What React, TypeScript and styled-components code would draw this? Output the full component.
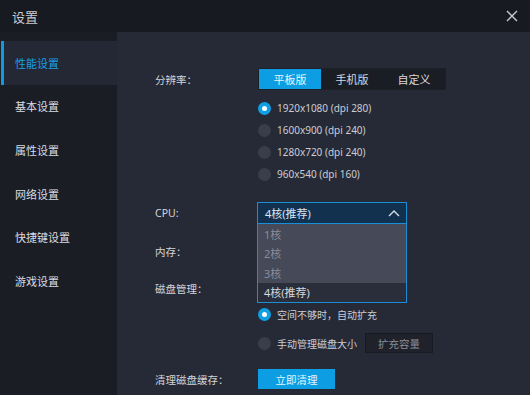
import React from 'react';
import styled, {createGlobalStyle} from 'styled-components';

const GlobalStyle = createGlobalStyle`
  html, body {
    margin: 0;
    padding: 0;
    background: #262a37;
    overflow: hidden;
  }
  * {
    box-sizing: border-box;
  }
`;

const Window = styled.div`
  width: 530px;
  height: 395px;
  display: flex;
  flex-direction: column;
  font-family: "Noto Sans", "Noto Sans CJK SC", sans-serif;
  color: #d2d4da;
`;

const TitleBar = styled.div`
  height: 32px;
  flex-shrink: 0;
  display: flex;
  align-items: center;
  justify-content: space-between;
  padding: 0 12px;
  background: #181a21;
`;

const Title = styled.span`
  font-size: 13px;
  color: #c9cbd1;
`;

const CloseButton = styled.div`
  width: 14px;
  height: 14px;
  display: flex;
  align-items: center;
  justify-content: center;
  margin-right: -1px;
`;

const Body = styled.div`
  flex: 1;
  display: flex;
`;

const Sidebar = styled.ul`
  width: 117px;
  flex-shrink: 0;
  margin: 0;
  padding: 9px 0 0 1px;
  list-style: none;
  background: #1b1d25;
`;

const NavItem = styled.li<{active?: boolean}>`
  height: 43.6px;
  display: flex;
  align-items: center;
  padding-left: ${p => (p.active ? '11px' : '14px')};
  font-size: 11px;
  color: ${p => (p.active ? '#1a9fe3' : '#dadce1')};
  background: ${p => (p.active ? '#242734' : 'transparent')};
  border-left: ${p => (p.active ? '3px solid #0e9be0' : 'none')};
`;

const Content = styled.div`
  flex: 1;
  padding: 36px 0 0 38px;
  background: #262a37;
`;

const Row = styled.div<{gap?: number}>`
  display: flex;
  align-items: flex-start;
  margin-top: ${p => p.gap ?? 0}px;
`;

const Label = styled.div`
  width: 103px;
  height: 22px;
  flex-shrink: 0;
  display: flex;
  align-items: center;
  font-size: 10.5px;
  color: #d2d4da;
`;

const Column = styled.div`
  display: flex;
  flex-direction: column;
`;

const Segmented = styled.div`
  display: flex;
  height: 22px;
  background: #1b1d25;
  border: 1px solid #1d2029;
  margin-bottom: 7px;
`;

const Segment = styled.div<{active?: boolean}>`
  width: 62px;
  display: flex;
  align-items: center;
  justify-content: center;
  font-size: 11px;
  color: ${p => (p.active ? '#e8f5fd' : '#d6d8dd')};
  background: ${p => (p.active ? '#0c9de3' : 'transparent')};
`;

const RadioRow = styled.div<{gap?: number}>`
  height: 22px;
  display: flex;
  align-items: center;
  gap: 6px;
  margin-top: ${p => p.gap ?? 0}px;
  font-size: 10px;
  color: #cbcdd3;
`;

const RadioDot = styled.span<{checked?: boolean}>`
  width: 13px;
  height: 13px;
  border-radius: 50%;
  flex-shrink: 0;
  display: flex;
  align-items: center;
  justify-content: center;
  background: ${p => (p.checked ? '#119fe4' : '#3a3d4a')};

  &::after {
    content: '';
    display: ${p => (p.checked ? 'block' : 'none')};
    width: 5px;
    height: 5px;
    border-radius: 50%;
    background: #ffffff;
  }
`;

const SelectWrap = styled.div`
  position: relative;
  width: 150px;
  margin-left: -1px;
`;

const SelectBox = styled.div<{open?: boolean}>`
  height: 22px;
  display: flex;
  align-items: center;
  justify-content: space-between;
  padding: 0 6px 0 7px;
  font-size: 11px;
  color: #dde6ef;
  background: ${p => (p.open ? '#12314f' : '#1b1d25')};
  border: 1px solid ${p => (p.open ? '#1a8fd6' : '#1d2029')};
`;

const Dropdown = styled.ul`
  position: absolute;
  top: 100%;
  left: 0;
  right: 0;
  margin: 0;
  padding: 0;
  list-style: none;
  border: 1px solid #1a8fd6;
  border-top: none;
  z-index: 2;
`;

const Option = styled.li<{selected?: boolean}>`
  height: 19.5px;
  display: flex;
  align-items: center;
  padding-left: 6px;
  font-size: 11px;
  color: ${p => (p.selected ? '#d6d8de' : '#8a8d9a')};
  background: ${p => (p.selected ? '#2a2e3b' : '#464957')};
`;

const GhostButton = styled.div`
  width: 68px;
  height: 20px;
  margin-left: 2px;
  display: flex;
  align-items: center;
  justify-content: center;
  font-size: 10.5px;
  color: #8c8f9a;
  background: #1f222b;
  border: 1px solid #181a21;
`;

const PrimaryButton = styled.div`
  width: 77px;
  height: 20px;
  display: flex;
  align-items: center;
  justify-content: center;
  font-size: 10.5px;
  color: #e6f4fc;
  background: #0c9de3;
  margin-top: 1px;
`;

const Hidden = styled.div`
  height: 22px;
`;

const navItems = ['性能设置', '基本设置', '属性设置', '网络设置', '快捷键设置', '游戏设置'];

const resolutions = [
  '1920x1080 (dpi 280)',
  '1600x900 (dpi 240)',
  '1280x720 (dpi 240)',
  '960x540 (dpi 160)',
];

const cpuOptions = ['1核', '2核', '3核', '4核(推荐)'];

const App: React.FC = () => {
  return (
    <>
      <GlobalStyle />
      <Window>
        <TitleBar>
          <Title>设置</Title>
          <CloseButton>
            <svg width="12" height="12" viewBox="0 0 12 12">
              <path d="M1 1L11 11M11 1L1 11" stroke="#c8cad0" strokeWidth="1.4" />
            </svg>
          </CloseButton>
        </TitleBar>
        <Body>
          <Sidebar>
            {navItems.map((name, i) => (
              <NavItem key={name} active={i === 0}>{name}</NavItem>
            ))}
          </Sidebar>
          <Content>
            <Row>
              <Label>分辨率：</Label>
              <Column>
                <Segmented>
                  <Segment active>平板版</Segment>
                  <Segment>手机版</Segment>
                  <Segment>自定义</Segment>
                </Segmented>
                {resolutions.map((r, i) => (
                  <RadioRow key={r}>
                    <RadioDot checked={i === 0} />
                    {r}
                  </RadioRow>
                ))}
              </Column>
            </Row>

            <Row gap={17}>
              <Label>CPU:</Label>
              <SelectWrap>
                <SelectBox open>
                  <span>4核(推荐)</span>
                  <svg width="12" height="8" viewBox="0 0 12 8">
                    <path d="M1 7L6 2L11 7" stroke="#d8dde4" strokeWidth="1.4" fill="none" />
                  </svg>
                </SelectBox>
                <Dropdown>
                  {cpuOptions.map(o => (
                    <Option key={o} selected={o === '4核(推荐)'}>{o}</Option>
                  ))}
                </Dropdown>
              </SelectWrap>
            </Row>

            <Row gap={16}>
              <Label>内存：</Label>
              <SelectWrap>
                <SelectBox />
              </SelectWrap>
            </Row>

            <Row gap={15}>
              <Label>磁盘管理：</Label>
              <Column>
                <Hidden />
                <RadioRow gap={4}>
                  <RadioDot checked />
                  空间不够时，自动扩充
                </RadioRow>
                <RadioRow gap={7}>
                  <RadioDot />
                  手动管理磁盘大小
                  <GhostButton>扩充容量</GhostButton>
                </RadioRow>
              </Column>
            </Row>

            <Row gap={14}>
              <Label>清理磁盘缓存：</Label>
              <PrimaryButton>立即清理</PrimaryButton>
            </Row>
          </Content>
        </Body>
      </Window>
    </>
  );
};

export default App;
